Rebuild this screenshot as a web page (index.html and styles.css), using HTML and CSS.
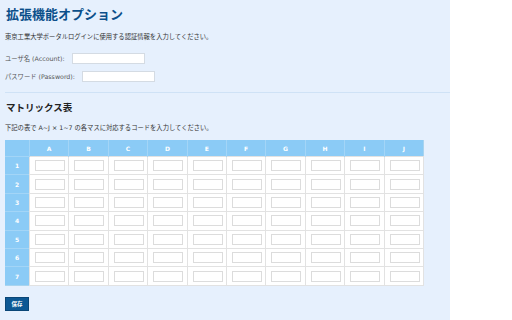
FILE: index.html
```html
<!DOCTYPE html>
<html lang="ja">
<head>
<meta charset="utf-8">
<title>拡張機能オプション</title>
<link rel="stylesheet" href="styles.css">
</head>
<body>
<h1 class="title">拡張機能オプション</h1>
<p class="desc">東京工業大学ポータルログインに使用する認証情報を入力してください。</p>
<div class="field f1"><label>ユーザ名 (Account):</label><input class="text" type="text"></div>
<div class="field f2"><label>パスワード (Password):</label><input class="text" type="password"></div>
<hr class="sep">
<h2 class="sub">マトリックス表</h2>
<p class="desc d2">下記の表で A~J × 1~7 の各マスに対応するコードを入力してください。</p>
<table class="matrix">
<thead><tr><th class="corner"></th><th>A</th><th>B</th><th>C</th><th>D</th><th>E</th><th>F</th><th>G</th><th>H</th><th>I</th><th>J</th></tr></thead>
<tbody id="rows"></tbody>
</table>
<button class="save">保存</button>
<script>
var tb=document.getElementById('rows');
for(var r=1;r<=7;r++){var tr=document.createElement('tr');var th=document.createElement('th');th.textContent=r;tr.appendChild(th);
for(var c=0;c<10;c++){var td=document.createElement('td');var i=document.createElement('input');i.className='cell';td.appendChild(i);tr.appendChild(td);}tb.appendChild(tr);}
</script>
</body>
</html>
```
FILE: styles.css
```css
html { background: #ffffff; }
body {
  margin: 0;
  padding: 0 5px;
  width: 450px;
  box-sizing: border-box;
  min-height: 320px;
  background: #e6f0fd;
  font-family: "DejaVu Sans", "Noto Sans CJK JP", sans-serif;
  color: #333;
  overflow: hidden;
}
.title {
  margin: 6px 0 0 1px;
  font-family: "Noto Sans CJK JP", sans-serif;
  font-size: 13px;
  line-height: 16px;
  font-weight: bold;
  color: #0b4f8a;
}
.desc {
  margin: 10px 0 0;
  font-size: 6.3px;
  line-height: 10px;
  color: #333;
}
.field {
  display: flex;
  align-items: center;
  height: 12px;
  font-size: 6.3px;
  color: #555;
}
.f1 { margin-top: 10px; }
.f2 { margin-top: 6px; }
.field label { margin-right: 7px; }
.text {
  width: 73px;
  height: 11px;
  box-sizing: border-box;
  border: 1px solid #d4dbe3;
  background: #fff;
  padding: 0;
  margin: 0;
}
.sep {
  margin: 10px -5px 0 0;
  border: 0;
  border-top: 1px solid #cfe2f6;
  height: 0;
}
.sub {
  margin: 8px 0 0 1px;
  font-family: "Noto Sans CJK JP", sans-serif;
  font-size: 9.5px;
  line-height: 12px;
  font-weight: bold;
  color: #222;
}
.d2 { margin-top: 10px; }
.matrix {
  margin-top: 7px;
  border-collapse: collapse;
  width: 419px;
  table-layout: fixed;
  background: #fff;
  border-right: 1px solid #a8d4ef;
  border-bottom: 1px solid #a8d4ef;
}
.matrix th {
  background: #8bcbf6;
  color: #fff;
  font-size: 6px;
  font-weight: bold;
  padding: 0;
  text-align: center;
}
.matrix thead th {
  height: 16px;
  border-left: 1px solid #a3d5f7;
}
.matrix thead th.corner { width: 24px; border-left: 0; }
.matrix tbody th { border-top: 1px solid #a3d5f7; }
.matrix tbody tr { height: 18.4px; }
.matrix td {
  border: 1px solid #e2e2e2;
  padding: 0 0 0 5px;
  vertical-align: middle;
}
.cell {
  display: block;
  width: 30px;
  height: 11px;
  box-sizing: border-box;
  border: 1px solid #dcdcdc;
  background: #fff;
  padding: 0;
  margin: 0;
}
.save {
  display: block;
  margin-top: 11px;
  width: 24px;
  height: 14px;
  padding: 0;
  border: 1px solid #0a4677;
  background: #0d5894;
  color: #fff;
  font-family: "Noto Sans CJK JP", sans-serif;
  font-size: 5.5px;
  font-weight: bold;
}
```
